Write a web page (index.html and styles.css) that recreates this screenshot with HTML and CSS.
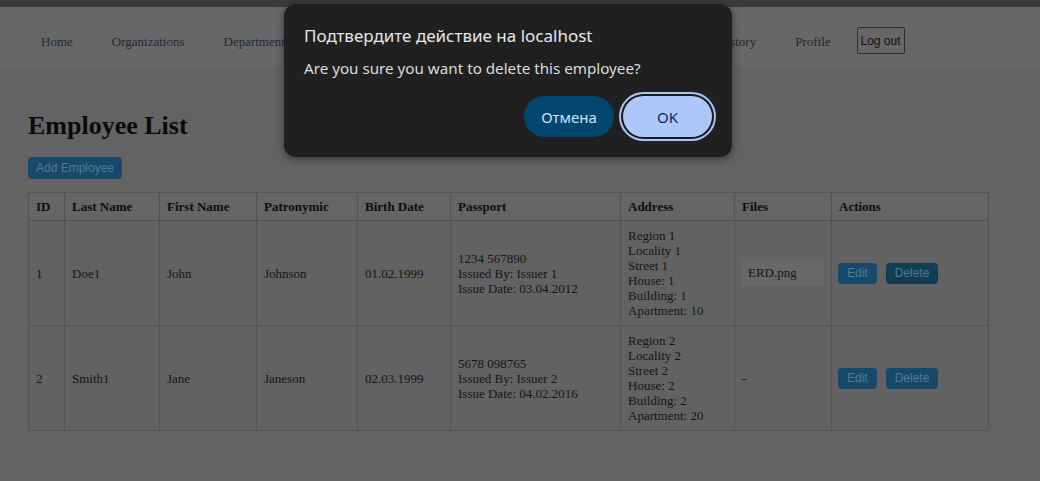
FILE: index.html
```html
<!DOCTYPE html>
<html lang="en">
<head>
<meta charset="utf-8">
<title>Employee List</title>
<link rel="stylesheet" href="styles.css">
</head>
<body>
<div class="topstrip"></div>
<nav class="navbar">
  <ul class="nav-list">
    <li><a href="#">Home</a></li>
    <li><a href="#">Organizations</a></li>
    <li><a href="#">Departments</a></li>
    <li><a href="#">Positions</a></li>
    <li><a href="#">Employees</a></li>
    <li><a href="#">Business Trips</a></li>
    <li><a href="#">Vacations</a></li>
    <li><a href="#">History</a></li>
    <li><a href="#">Profile</a></li>
    <li><button class="logout">Log out</button></li>
  </ul>
</nav>
<main class="content">
  <h1 class="title">Employee List</h1>
  <button class="btn btn-add">Add Employee</button>
  <table class="emp-table">
    <colgroup>
      <col class="c-id"><col class="c-last"><col class="c-first"><col class="c-patr"><col class="c-birth"><col class="c-pass"><col class="c-addr"><col class="c-files"><col class="c-act">
    </colgroup>
    <thead>
      <tr><th>ID</th><th>Last Name</th><th>First Name</th><th>Patronymic</th><th>Birth Date</th><th>Passport</th><th>Address</th><th>Files</th><th>Actions</th></tr>
    </thead>
    <tbody>
      <tr>
        <td>1</td><td>Doe1</td><td>John</td><td>Johnson</td><td>01.02.1999</td>
        <td>1234 567890<br>Issued By: Issuer 1<br>Issue Date: 03.04.2012</td>
        <td>Region 1<br>Locality 1<br>Street 1<br>House: 1<br>Building: 1<br>Apartment: 10</td>
        <td><div class="file">ERD.png</div></td>
        <td class="act-cell"><div class="actions"><button class="btn btn-sm">Edit</button><button class="btn btn-sm btn-dark">Delete</button></div></td>
      </tr>
      <tr>
        <td>2</td><td>Smith1</td><td>Jane</td><td>Janeson</td><td>02.03.1999</td>
        <td>5678 098765<br>Issued By: Issuer 2<br>Issue Date: 04.02.2016</td>
        <td>Region 2<br>Locality 2<br>Street 2<br>House: 2<br>Building: 2<br>Apartment: 20</td>
        <td>-</td>
        <td class="act-cell"><div class="actions"><button class="btn btn-sm">Edit</button><button class="btn btn-sm">Delete</button></div></td>
      </tr>
    </tbody>
  </table>
</main>

<div class="dialog" role="dialog">
  <div class="dlg-title">Подтвердите действие на localhost</div>
  <div class="dlg-msg">Are you sure you want to delete this employee?</div>
  <div class="dlg-buttons">
    <button class="dlg-btn dlg-cancel">Отмена</button>
    <button class="dlg-btn dlg-ok">OK</button>
  </div>
</div>
</body>
</html>
```
FILE: styles.css
```css
html, body {
  margin: 0;
  padding: 0;
}
body {
  background: #636363;
  font-family: "Liberation Serif", "Times New Roman", serif;
  color: #111;
  min-height: 481px;
  position: relative;
}
.topstrip {
  height: 7px;
  background: #3b3b3b;
}
.navbar {
  background: #676767;
  height: 61px;
  box-sizing: border-box;
  padding-top: 6px;
  display: flex;
  align-items: center;
}
.nav-list {
  list-style: none;
  margin: 0;
  padding: 0 0 0 41px;
  display: flex;
  align-items: center;
  gap: 39px;
}
.nav-list a {
  color: #1f2732;
  text-decoration: none;
  font-size: 13px;
}
.logout {
  font-family: "Liberation Sans", Arial, sans-serif;
  font-size: 12px;
  color: #111;
  background: transparent;
  border: 1px solid #2e2e2e;
  border-radius: 2px;
  height: 27px;
  padding: 0 3px;
  margin-left: -13px;
}
.content {
  padding: 0 28px;
}
.title {
  font-size: 26px;
  font-weight: bold;
  margin: 0;
  padding-top: 43px;
  line-height: 30px;
  color: #0a0a0a;
}
.btn {
  font-family: "Liberation Sans", Arial, sans-serif;
  border: none;
  background: #174a6a;
  color: #527a95;
  border-radius: 4px;
  cursor: pointer;
}
.btn-add {
  margin-top: 16px;
  font-size: 12px;
  height: 22px;
  padding: 0 8px;
  display: block;
}
.emp-table {
  margin-top: 13px;
  border-collapse: collapse;
  width: 960px;
  table-layout: fixed;
  font-size: 13px;
}
.c-id { width: 36px; }
.c-last { width: 95px; }
.c-first { width: 97px; }
.c-patr { width: 101px; }
.c-birth { width: 93px; }
.c-pass { width: 170px; }
.c-addr { width: 114px; }
.c-files { width: 97px; }
.c-act { width: 157px; }
.emp-table th,
.emp-table td {
  border: 1px solid #545454;
  padding: 7px 7px;
  text-align: left;
  vertical-align: middle;
  line-height: 15px;
}
.emp-table th {
  padding: 6px 7px;
  background: #656565;
  font-weight: bold;
  color: #0d0d0d;
}
.emp-table td {
  background: #626262;
  color: #151515;
}
.emp-table td.act-cell {
  padding-left: 6px;
}
.file {
  background: #686868;
  padding: 5px 6px 6px;
  line-height: 15px;
}
.actions {
  display: flex;
  gap: 9px;
}
.btn-sm {
  font-size: 12px;
  height: 21px;
  padding: 0 9px;
  border-radius: 4px;
}
.btn-dark {
  background: #123c56;
}

/* native-style confirm dialog */
.dialog {
  position: absolute;
  left: 284px;
  top: 4px;
  width: 448px;
  height: 153px;
  box-sizing: border-box;
  background: #202020;
  border-radius: 12px;
  box-shadow: 0 2px 8px rgba(0, 0, 0, 0.45);
  padding: 21px 17px 17px 20px;
  font-family: "Noto Sans", "Open Sans", sans-serif;
  display: flex;
  flex-direction: column;
}
.dlg-title {
  color: #e6e6e6;
  font-size: 17px;
  line-height: 22px;
}
.dlg-msg {
  color: #dcdcdc;
  font-size: 15.2px;
  line-height: 20px;
  margin-top: 11px;
}
.dlg-buttons {
  display: flex;
  justify-content: flex-end;
  gap: 9px;
  margin-top: auto;
  padding: 3px;
}
.dlg-btn {
  font-family: "Noto Sans", "Open Sans", sans-serif;
  font-size: 15px;
  height: 41px;
  border: none;
  border-radius: 21px;
}
.dlg-cancel {
  width: 90px;
  background: #00466f;
  color: #cfe3f7;
}
.dlg-ok {
  width: 89px;
  background: #adc8f8;
  color: #0b2a5b;
  box-shadow: 0 0 0 2px #1a1a1a, 0 0 0 4px #a9c6f6;
}
```
